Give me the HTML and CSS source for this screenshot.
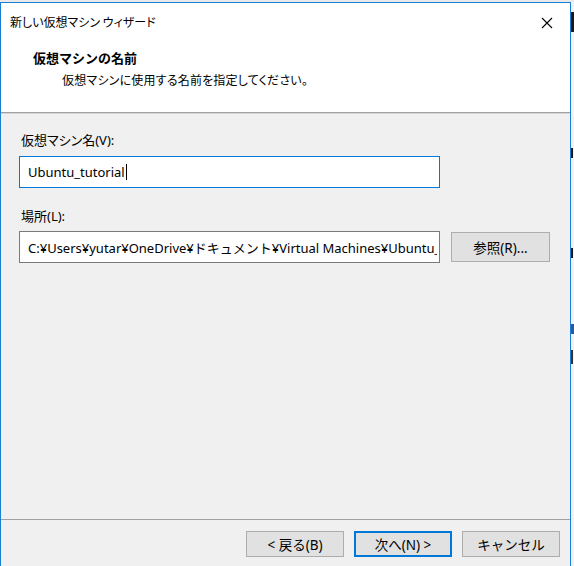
FILE: index.html
```html
<!DOCTYPE html>
<html lang="ja">
<head>
<meta charset="utf-8">
<title>新しい仮想マシン ウィザード</title>
<link rel="stylesheet" href="styles.css">
</head>
<body>
<div class="screen">
  <div class="window">
    <div class="titlebar">
      <span class="title">新しい仮想マシン ウィザード</span>
      <span class="close">
        <svg width="12" height="12" viewBox="0 0 12 12"><path d="M1 1 L11 11 M11 1 L1 11" stroke="#000" stroke-width="1.1" fill="none"/></svg>
      </span>
    </div>
    <div class="header">
      <div class="heading">仮想マシンの名前</div>
      <div class="subheading">仮想マシンに使用する名前を指定してください。</div>
    </div>
    <div class="main">
      <div class="label">仮想マシン名(V):</div>
      <div class="field focused"><span class="value">Ubuntu_tutorial</span><span class="caret"></span></div>
      <div class="label second">場所(L):</div>
      <div class="row">
        <div class="field path"><span class="value">C:¥Users¥yutar¥OneDrive¥ドキュメント¥Virtual Machines¥Ubuntu_tutorial</span></div>
        <button class="btn browse">参照(R)...</button>
      </div>
    </div>
    <div class="footer">
      <button class="btn">&lt; 戻る(B)</button>
      <button class="btn primary">次へ(N) &gt;</button>
      <button class="btn">キャンセル</button>
    </div>
  </div>
  <div class="desktop">
    <span class="frag f1"></span>
    <span class="frag f2"></span>
    <span class="frag f3"></span>
    <span class="frag f4"></span>
    <span class="frag f5"></span>
  </div>
</div>
</body>
</html>
```

FILE: styles.css
```css
* { box-sizing: border-box; }
html, body {
  margin: 0;
  padding: 0;
  width: 574px;
  height: 566px;
  overflow: hidden;
  background: #eeeeee;
  font-family: "Noto Sans", "Noto Sans CJK JP", sans-serif;
  color: #000;
}
.screen {
  display: flex;
  width: 574px;
  height: 566px;
  padding-top: 2px;
  background: #e9e9e9;
}
.window {
  width: 571px;
  flex: none;
  height: 564px;
  border: 1px solid #1a7fd4;
  border-bottom: none;
  display: flex;
  flex-direction: column;
  background: #f0f0f0;
}
.titlebar {
  height: 38px;
  background: #fff;
  display: flex;
  align-items: center;
  justify-content: space-between;
  padding-left: 9px;
}
.title {
  font-size: 12px;
  line-height: 16px;
  font-feature-settings: "palt";
  font-family: "Noto Sans CJK JP", sans-serif;
}
.close {
  width: 46px;
  height: 38px;
  display: flex;
  align-items: center;
  justify-content: center;
  margin-top: 1px;
}
.header {
  background: #fff;
  padding: 8px 0 23px 32px;
  border-bottom: 1px solid #a0a0a0;
  box-shadow: 0 1px 0 #d6d6d6;
}
.heading {
  font-family: "Noto Sans CJK JP", sans-serif;
  font-weight: bold;
  font-size: 13px;
  line-height: 18px;
}
.subheading {
  font-family: "Noto Sans CJK JP", sans-serif;
  font-size: 12px;
  line-height: 18px;
  margin-top: 4px;
  padding-left: 29px;
  font-feature-settings: "palt";
  letter-spacing: 0.2px;
}
.main {
  flex: 1;
  padding: 18px 0 0 18px;
}
.label {
  font-size: 13px;
  line-height: 18px;
  padding-left: 2px;
  font-feature-settings: "palt";
}
.label.second {
  margin-top: 19px;
}
.field {
  width: 421px;
  flex: none;
  height: 32px;
  background: #fff;
  border: 1px solid #7a7a7a;
  display: flex;
  align-items: center;
  padding-left: 8px;
  overflow: hidden;
  white-space: nowrap;
  font-size: 13px;
  margin-top: 7px;
}
.field.focused {
  border-color: #0078d7;
}
.caret {
  width: 1px;
  height: 16px;
  background: #000;
  margin-left: 1px;
}
.row {
  display: flex;
  align-items: center;
  gap: 11px;
  margin-top: 6px;
}
.row .field {
  margin-top: 0;
}
.field.path {
  padding-right: 2px;
}
.field.path .value {
  overflow: hidden;
  display: block;
  min-width: 0;
  flex: 1;
}
.btn {
  width: 98px;
  height: 26px;
  flex: none;
  background: #e1e1e1;
  border: 1px solid #adadad;
  font-family: "Noto Sans", "Noto Sans CJK JP", sans-serif;
  font-size: 13.5px;
  color: #000;
  padding: 0;
  display: flex;
  align-items: center;
  justify-content: center;
}
.btn.browse {
  width: 99px;
  height: 30px;
}
.btn.primary {
  border: 2px solid #0078d7;
}
.footer {
  height: 47px;
  border-top: 1px solid #a0a0a0;
  display: flex;
  justify-content: flex-end;
  gap: 10px;
  padding: 11px 10px 0 0;
}
.desktop {
  flex: 1;
  position: relative;
  background: #f2f2f2;
}
.frag {
  position: absolute;
  left: 0;
  width: 3px;
  background: #1a1a1a;
}
.f1 { top: 10px; height: 20px; }
.f2 { top: 146px; height: 10px; width: 2px; }
.f3 { top: 246px; height: 10px; width: 2px; }
.f4 { top: 322px; height: 10px; background: #2a5aa0; }
.f5 { top: 348px; height: 14px; width: 2px; background: #333; }
```
